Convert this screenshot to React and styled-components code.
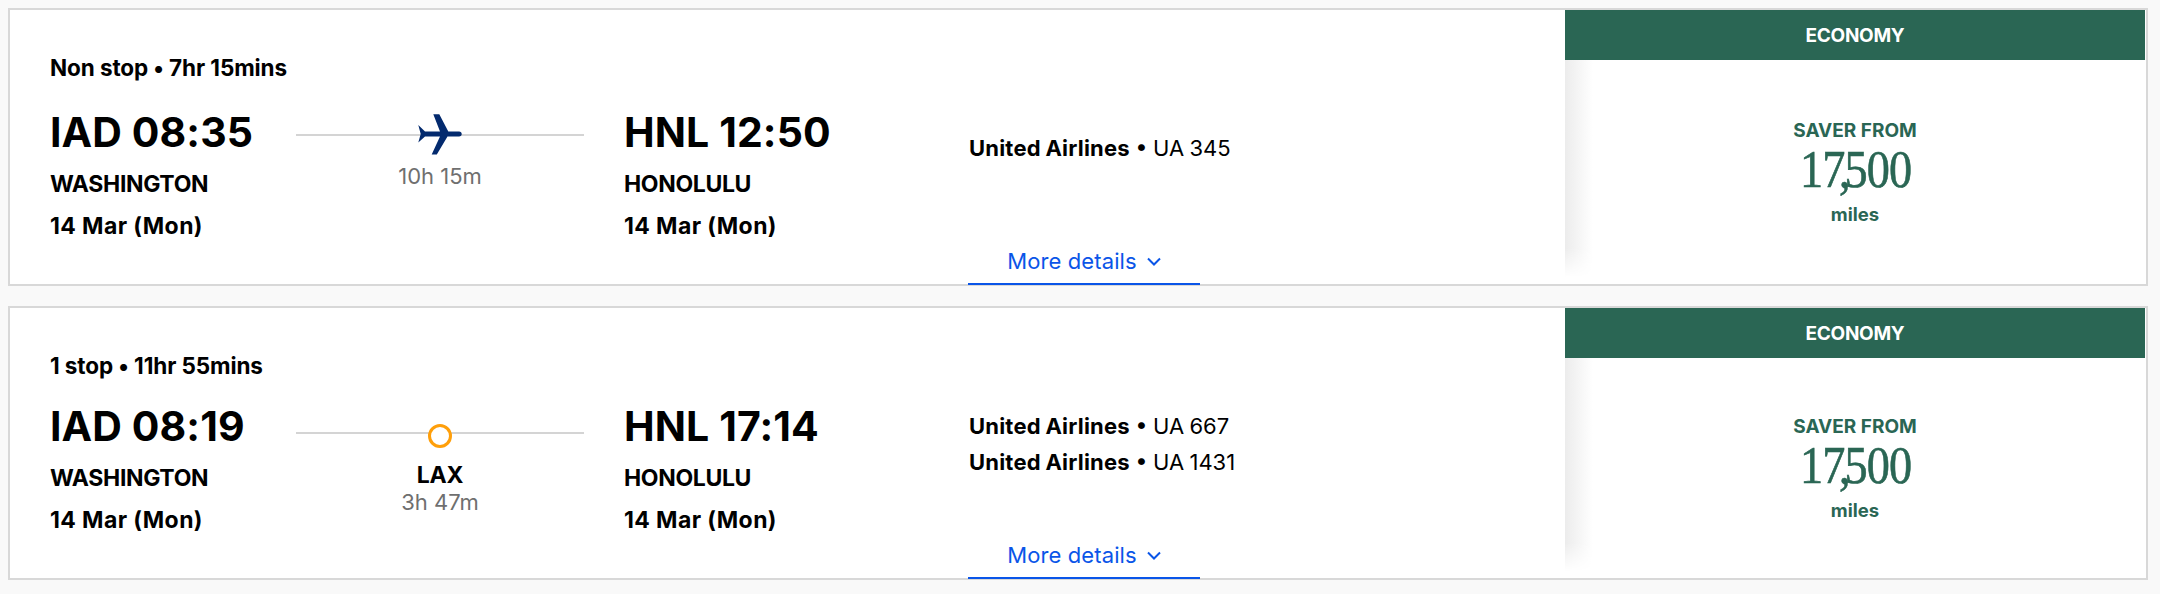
import React from 'react';
import styled, { createGlobalStyle } from 'styled-components';

const GlobalStyle = createGlobalStyle`
    html, body {
        margin: 0;
        padding: 0;
        background: #f9f9f9;
    }

    * {
        box-sizing: border-box;
    }
`;

const Page = styled.div`
    width: 2160px;
    height: 594px;
    padding: 8px 12px 0 8px;
    display: flex;
    flex-direction: column;
    gap: 20px;
    font-family: Inter, "Liberation Sans", sans-serif;
    color: #000;
`;

const Card = styled.div`
    height: ${(props) => props.$height}px;
    display: flex;
    background: #fff;
    border: 2px solid #d8d8d8;
`;

const Info = styled.div`
    flex: 1;
    min-width: 0;
    display: flex;
    flex-direction: column;
    padding-left: 40px;
`;

const Summary = styled.div`
    height: 32px;
    margin-top: 42px;
    font-size: 22.5px;
    line-height: 32px;
    font-weight: 700;
    letter-spacing: -0.1px;
`;

const Route = styled.div`
    flex: 1;
    display: flex;
    align-items: flex-start;
    min-height: 0;
    padding-top: ${(props) => props.$top}px;
`;

const Endpoint = styled.div`
    width: ${(props) => props.$width}px;
    flex-shrink: 0;
`;

const Time = styled.div`
    font-size: 41px;
    line-height: 48px;
    font-weight: 700;
    letter-spacing: 0.1px;
`;

const City = styled.div`
    margin-top: 13px;
    font-size: 23px;
    line-height: 30px;
    font-weight: 700;
    letter-spacing: -0.35px;
`;

const DateText = styled.div`
    margin-top: 12px;
    font-size: 23px;
    line-height: 30px;
    font-weight: 700;
    letter-spacing: 0.4px;
`;

const Leg = styled.div`
    width: 288px;
    margin-right: 40px;
    flex-shrink: 0;
    display: flex;
    flex-direction: column;
    align-items: center;
    padding-top: ${(props) => props.$top}px;
`;

const Track = styled.div`
    position: relative;
    width: 100%;
    height: 2px;
    background: #d4d4d4;
`;

const PlaneMark = styled.svg`
    position: absolute;
    left: 122px;
    top: -20px;
    width: 44px;
    height: 41px;
    fill: #032a6e;
`;

const StopMark = styled.span`
    position: absolute;
    left: 132px;
    top: -8px;
    width: 24px;
    height: 24px;
    background: #fff;
    border: 3.5px solid #ff9f0a;
    border-radius: 50%;
`;

const StopCode = styled.div`
    margin-top: 27px;
    font-size: 23px;
    line-height: 28px;
    font-weight: 700;
    letter-spacing: -0.3px;
`;

const Duration = styled.div`
    margin-top: ${(props) => props.$gap}px;
    font-size: 22px;
    line-height: 27px;
    color: #6f6f6f;
`;

const Flights = styled.div`
    display: flex;
    flex-direction: column;
    gap: 6px;
    padding-top: ${(props) => props.$top}px;
`;

const Flight = styled.div`
    font-size: 22px;
    line-height: 30px;
    white-space: nowrap;
    word-spacing: -0.8px;

    b {
        font-weight: 700;
        letter-spacing: 0.2px;
    }
`;

const Footer = styled.div`
    height: 48px;
    margin-bottom: -1px;
    padding-left: 918px;
    display: flex;
`;

const MoreDetails = styled.a`
    width: 232px;
    height: 100%;
    display: flex;
    align-items: center;
    justify-content: center;
    gap: 10px;
    border-bottom: 2px solid #0a55e8;
    color: #0a55e8;
    font-size: 22px;
    letter-spacing: 0.1px;
    padding-top: 2px;
`;

const Chevron = styled.svg`
    width: 14px;
    height: 9px;
    fill: none;
    stroke: #0a55e8;
    stroke-width: 2;
`;

const Fare = styled.div`
    width: 580px;
    margin-right: 1px;
    flex-shrink: 0;
    display: flex;
    flex-direction: column;
`;

const FareHeader = styled.div`
    height: 50px;
    display: flex;
    align-items: center;
    justify-content: center;
    background: #2a6654;
    color: #fff;
    font-size: 19px;
    font-weight: 700;
    letter-spacing: -0.3px;
`;

const FareBody = styled.div`
    position: relative;
    flex: 1;
    display: flex;
    flex-direction: column;
    align-items: center;
    justify-content: center;
    color: #2a6654;

    &::before {
        content: '';
        position: absolute;
        left: 0;
        top: 0;
        bottom: 0;
        width: 28px;
        background: linear-gradient(to right, #ececec, #fff);
        mask-image: linear-gradient(to bottom, #000 84%, transparent 97%);
    }
`;

const FareLabel = styled.div`
    font-size: 19px;
    line-height: 24px;
    font-weight: 700;
`;

const Miles = styled.div`
    font-family: "Liberation Serif", serif;
    font-size: 52px;
    line-height: 54px;
    transform: scaleX(0.89);
    letter-spacing: -1px;
    white-space: nowrap;
    -webkit-text-stroke: 0.6px #2a6654;

    span {
        letter-spacing: -7px;
    }
`;

const MilesUnit = styled.div`
    margin-top: 5px;
    font-size: 18.5px;
    line-height: 24px;
    font-weight: 700;
`;

const flights = [
    {
        height: 278,
        summary: 'Non stop • 7hr 15mins',
        routeTop: 24,
        departure: 'IAD 08:35',
        arrival: 'HNL 12:50',
        legTop: 26,
        duration: '10h 15m',
        flightsTop: 25,
        numbers: ['UA 345'],
    },
    {
        height: 274,
        summary: '1 stop • 11hr 55mins',
        routeTop: 20,
        departure: 'IAD 08:19',
        arrival: 'HNL 17:14',
        legTop: 30,
        stop: 'LAX',
        duration: '3h 47m',
        flightsTop: 9,
        numbers: ['UA 667', 'UA 1431'],
    },
];

const FlightCard = ({ flight }) => (
    <Card $height={flight.height}>
        <Info>
            <Summary>{flight.summary}</Summary>
            <Route $top={flight.routeTop}>
                <Endpoint $width={246}>
                    <Time>{flight.departure}</Time>
                    <City>WASHINGTON</City>
                    <DateText>14 Mar (Mon)</DateText>
                </Endpoint>
                <Leg $top={flight.legTop}>
                    <Track>
                        {flight.stop ? (
                            <StopMark />
                        ) : (
                            <PlaneMark viewBox="0 0 44 41">
                                <path d="M0.3 11 L7 17.4 L22 17.4 L15.3 0.3 L21.3 0.3 L30.3 17.4 L41 17.4 Q43.7 17.6 43.7 20 Q43.7 22.4 41 22.5 L29.5 22.5 L18.8 40.5 L13.7 40.5 L22 22.5 L7 22.5 L0.3 28.5 L2.7 20 Z" />
                            </PlaneMark>
                        )}
                    </Track>
                    {flight.stop && <StopCode>{flight.stop}</StopCode>}
                    <Duration $gap={flight.stop ? 0 : 27}>{flight.duration}</Duration>
                </Leg>
                <Endpoint $width={345}>
                    <Time>{flight.arrival}</Time>
                    <City>HONOLULU</City>
                    <DateText>14 Mar (Mon)</DateText>
                </Endpoint>
                <Flights $top={flight.flightsTop}>
                    {flight.numbers.map((number) => (
                        <Flight key={number}>
                            <b>United Airlines</b> • {number}
                        </Flight>
                    ))}
                </Flights>
            </Route>
            <Footer>
                <MoreDetails>
                    More details
                    <Chevron viewBox="0 0 14 9">
                        <polyline points="1,1.5 7,7.5 13,1.5" />
                    </Chevron>
                </MoreDetails>
            </Footer>
        </Info>
        <Fare>
            <FareHeader>ECONOMY</FareHeader>
            <FareBody>
                <FareLabel>SAVER FROM</FareLabel>
                <Miles>
                    1<span>7,</span>500
                </Miles>
                <MilesUnit>miles</MilesUnit>
            </FareBody>
        </Fare>
    </Card>
);

const App = () => (
    <Page>
        <GlobalStyle />
        {flights.map((flight) => (
            <FlightCard key={flight.departure} flight={flight} />
        ))}
    </Page>
);

export default App;
